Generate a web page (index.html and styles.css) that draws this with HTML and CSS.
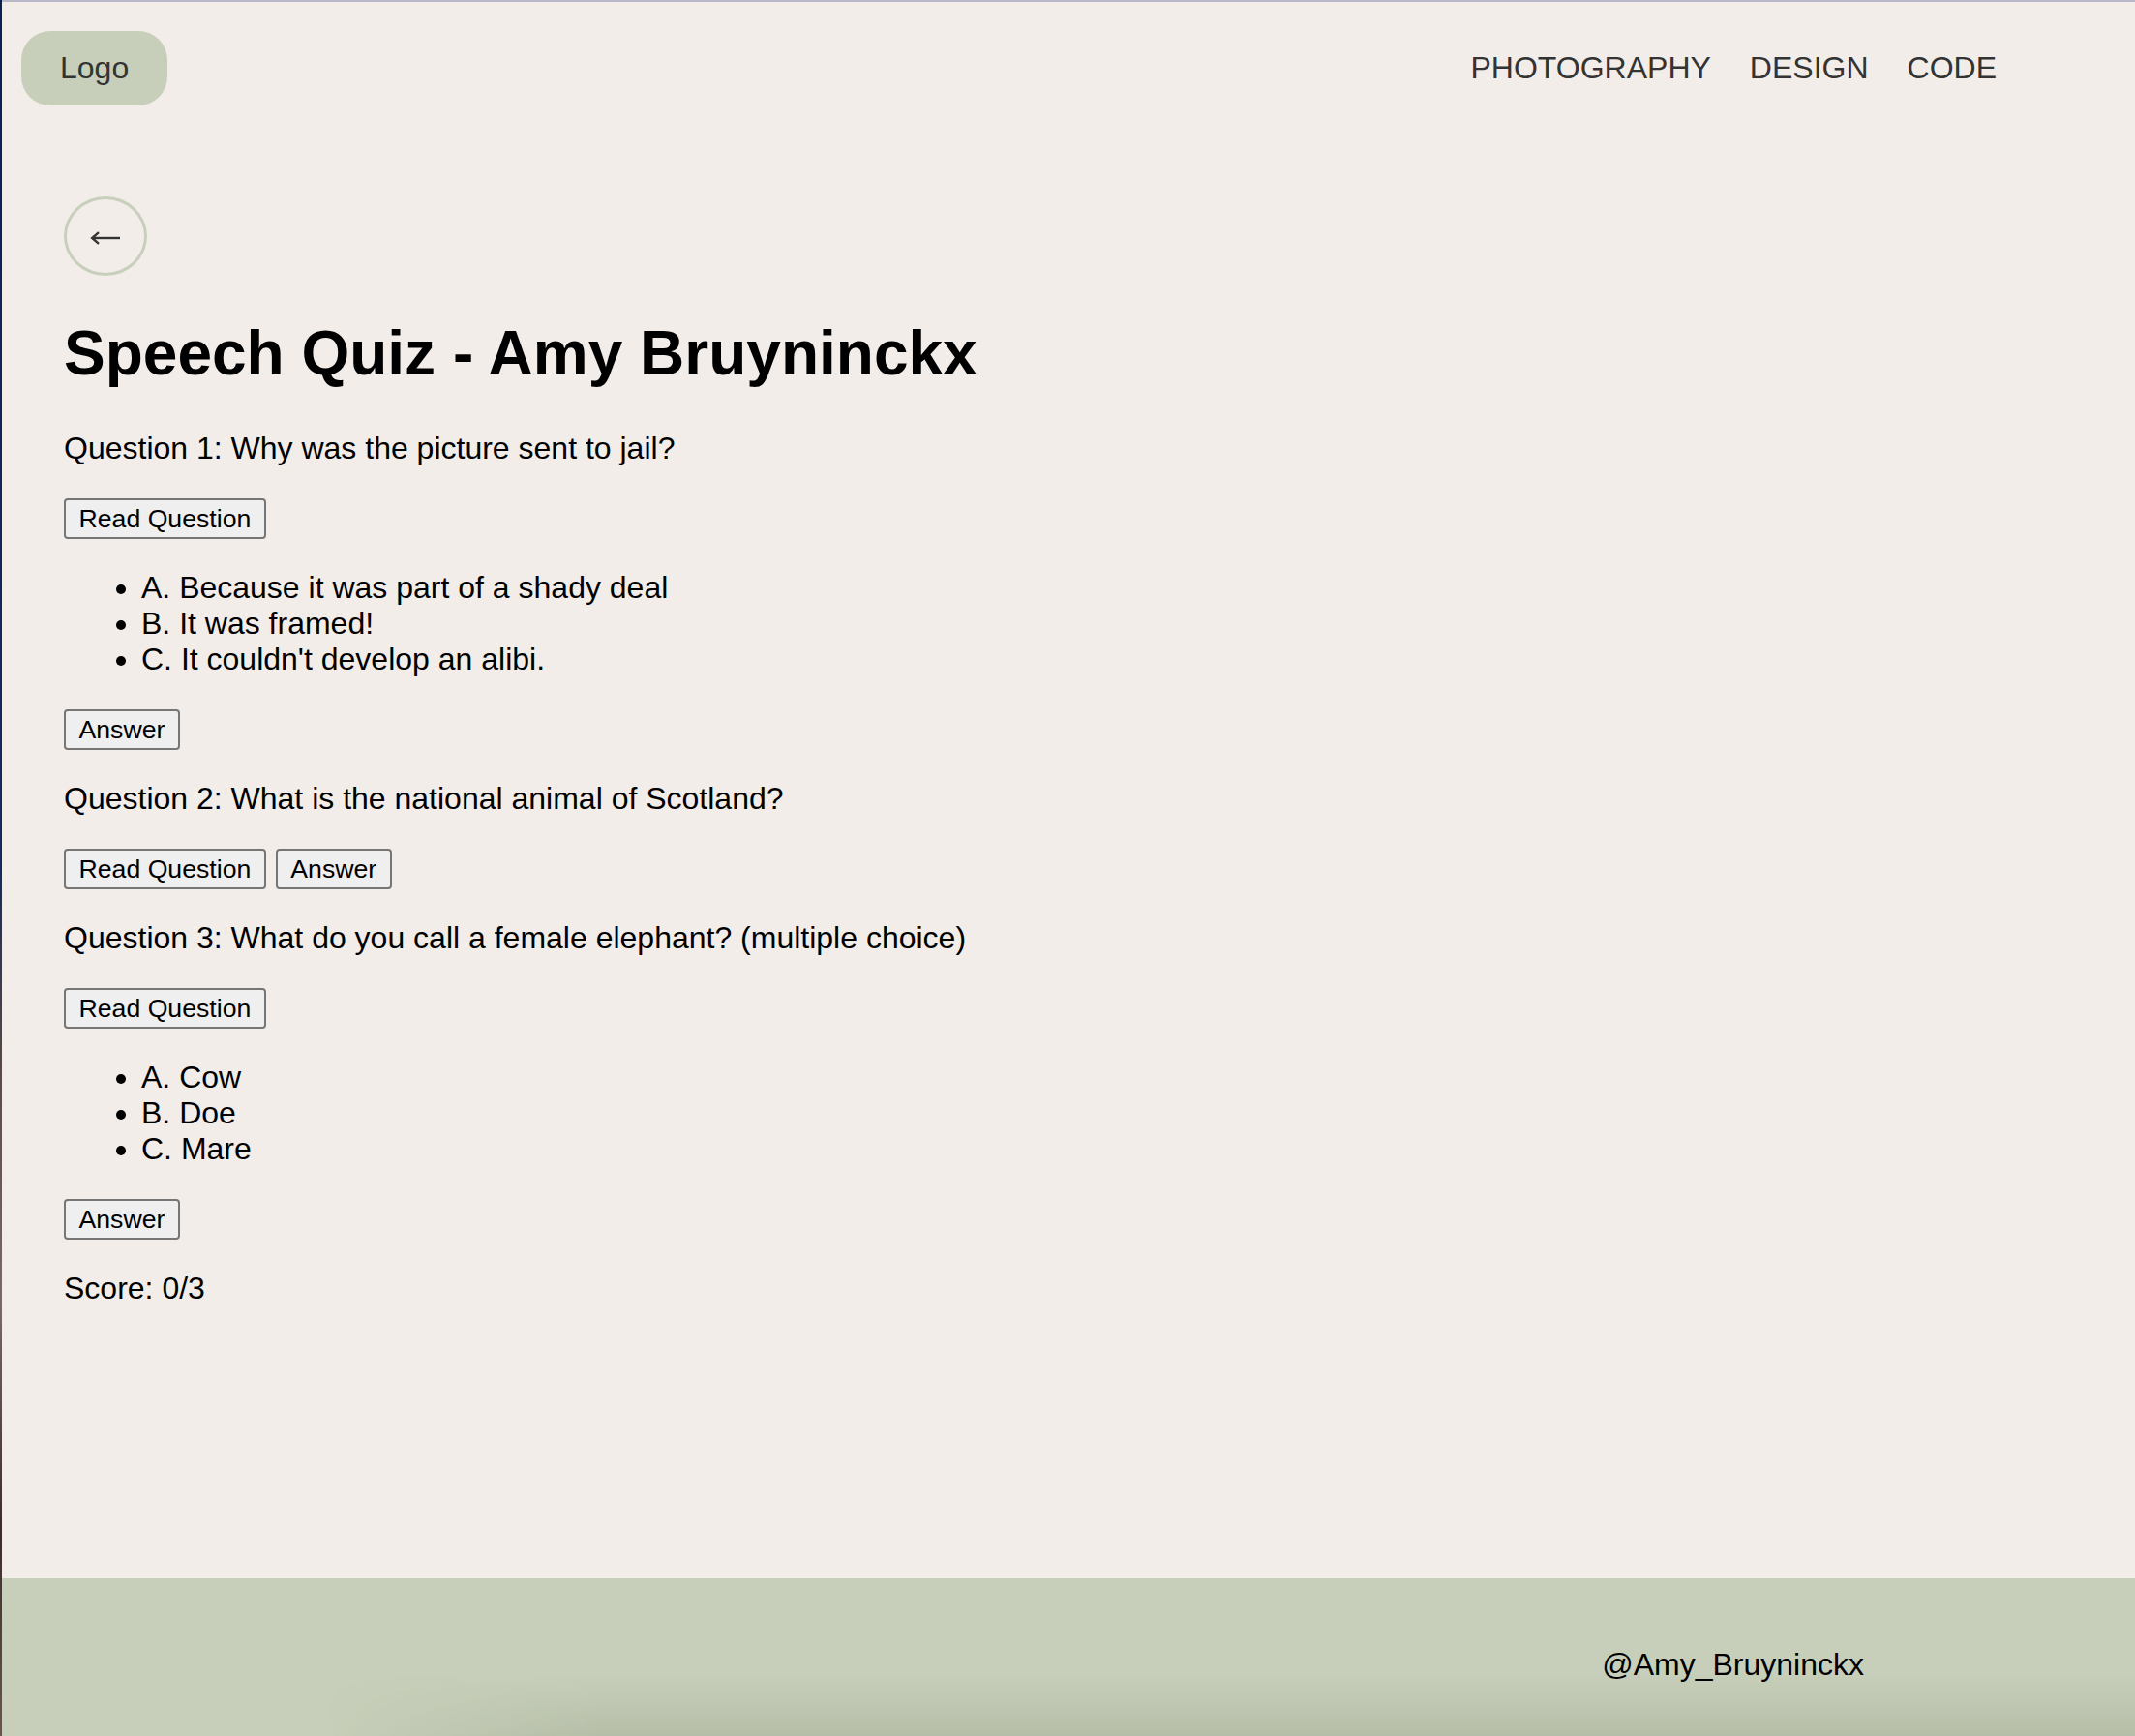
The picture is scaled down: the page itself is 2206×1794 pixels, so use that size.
FILE: index.html
```html
<!DOCTYPE html>
<html lang="en">
<head>
<meta charset="utf-8">
<title>Speech Quiz - Amy Bruyninckx</title>
<link rel="stylesheet" href="styles.css">
</head>
<body>
<div class="page">
  <header class="site-header">
    <a class="logo" href="#">Logo</a>
    <nav class="nav">
      <a href="#">PHOTOGRAPHY</a>
      <a href="#">DESIGN</a>
      <a href="#">CODE</a>
    </nav>
  </header>

  <main class="content">
    <a class="back" href="#" aria-label="Back">
      <svg class="back-icon" width="32" height="14" viewBox="0 0 32 14" aria-hidden="true">
        <path d="M31 7H3" stroke="#333" stroke-width="2.4" fill="none"/>
        <path d="M9 1.2L2.2 7L9 12.8" stroke="#333" stroke-width="2.4" fill="none" stroke-linejoin="miter"/>
      </svg>
    </a>

    <h1 class="title">Speech Quiz - Amy Bruyninckx</h1>

    <p class="question">Question 1: Why was the picture sent to jail?</p>
    <div class="actions"><button class="btn" type="button">Read Question</button></div>
    <ul class="choices">
      <li>A. Because it was part of a shady deal</li>
      <li>B. It was framed!</li>
      <li>C. It couldn't develop an alibi.</li>
    </ul>
    <div class="actions"><button class="btn" type="button">Answer</button></div>

    <p class="question">Question 2: What is the national animal of Scotland?</p>
    <div class="actions">
      <button class="btn" type="button">Read Question</button>
      <button class="btn" type="button">Answer</button>
    </div>

    <p class="question">Question 3: What do you call a female elephant? (multiple choice)</p>
    <div class="actions"><button class="btn" type="button">Read Question</button></div>
    <ul class="choices">
      <li>A. Cow</li>
      <li>B. Doe</li>
      <li>C. Mare</li>
    </ul>
    <div class="actions"><button class="btn" type="button">Answer</button></div>

    <p class="score">Score: 0/3</p>
  </main>

  <footer class="site-footer">
    <span class="handle">@Amy_Bruyninckx</span>
  </footer>
</div>
</body>
</html>
```

FILE: styles.css
```css
html, body {
  margin: 0;
  padding: 0;
}

body {
  background: linear-gradient(to bottom, #0c1f4f 0%, #16295a 50%, #5b4a46 62%, #7a6a66 75%, #3b2b29 88%, #6a5550 100%);
  font-family: "Liberation Sans", Arial, Helvetica, sans-serif;
  color: #000;
}

.page {
  margin-left: 2px;
  min-height: 100vh;
  box-sizing: border-box;
  border-top: 2px solid #b9b8c8;
  background: #f2ede9;
  display: flex;
  flex-direction: column;
}

/* Header */
.site-header {
  display: flex;
  justify-content: space-between;
  align-items: center;
  padding: 30px 143px 0 20px;
}

.logo {
  display: block;
  background: #c7cfbb;
  color: #333;
  text-decoration: none;
  font-size: 32px;
  line-height: 37px;
  padding: 20px 40px;
  border-radius: 30px;
}

.nav {
  display: flex;
  gap: 40px;
}

.nav a {
  color: #333;
  text-decoration: none;
  font-size: 32px;
}

/* Main */
.content {
  padding: 0 64px;
  font-size: 32px;
}

.back {
  margin-top: 94px;
  width: 86px;
  height: 82px;
  box-sizing: border-box;
  border: 3px solid #c8d0bc;
  border-radius: 50%;
  display: flex;
  align-items: center;
  justify-content: center;
  padding-top: 4px;
}

.back-icon {
  display: block;
}

.title {
  font-size: 64px;
  font-weight: bold;
  margin: 42.88px 0;
}

.question,
.score {
  margin: 32px 0;
}

.actions {
  display: flex;
  gap: 10px;
  margin: 32px 0;
  padding-top: 1px;
}

.btn {
  font-family: "Liberation Sans", Arial, Helvetica, sans-serif;
  font-size: 26.67px;
  color: #000;
  background: #efefef;
  border: 2px solid #767676;
  border-radius: 4px;
  height: 42px;
  padding: 0 13.5px;
  line-height: 30px;
  box-sizing: border-box;
}

.choices {
  margin: 32px 0;
  padding-left: 80px;
}

/* Footer */
.site-footer {
  margin-top: auto;
  position: relative;
  height: 163px;
  box-sizing: border-box;
  background: #c7cfba;
  display: flex;
  justify-content: flex-end;
  padding: 71px 280px 0 0;
  font-size: 32px;
  color: #000;
}

.site-footer::after {
  content: "";
  position: absolute;
  left: 0;
  right: 0;
  bottom: 0;
  height: 64px;
  background: linear-gradient(to bottom, rgba(60, 70, 40, 0) 0%, rgba(60, 70, 40, 0.12) 100%);
  -webkit-mask-image: linear-gradient(to right, transparent 330px, #000 620px);
  mask-image: linear-gradient(to right, transparent 330px, #000 620px);
  pointer-events: none;
}

.handle {
  display: block;
}
```
